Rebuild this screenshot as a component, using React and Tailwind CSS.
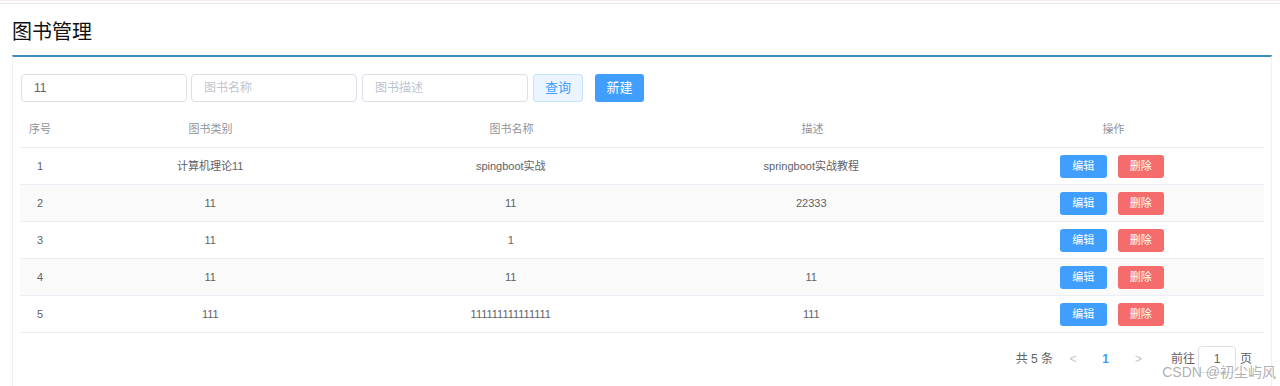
import React from 'react';

const rows = [
  { id: 1, type: '计算机理论11', name: 'spingboot实战', desc: 'springboot实战教程' },
  { id: 2, type: '11', name: '11', desc: '22333' },
  { id: 3, type: '11', name: '1', desc: '' },
  { id: 4, type: '11', name: '11', desc: '11' },
  { id: 5, type: '111', name: '111111111111111', desc: '111' },
];

function App() {
  return (
    <div className="relative h-[386px] overflow-hidden bg-white font-['Liberation_Sans','Noto_Sans_CJK_SC',sans-serif]">
      <div className="h-[4px] border-t border-t-[#fbe9e9] border-b border-b-[#e9e9e9]"></div>
      <div className="pl-[12px] pr-[8px]">
        <h1 className="h-[51px] pt-[15px] text-[20px] leading-[26px] text-[#111]">图书管理</h1>
        <div className="h-[340px] border-t-2 border-t-[#3c8dbc] border-x border-x-[#f0f0f0] px-[7px] pt-[17px]">
          <div className="ml-[1px] flex items-center">
            <input
              defaultValue="11"
              className="w-[166px] h-[28px] rounded-[4px] border border-[#dcdfe6] px-[12px] text-[12px] text-[#606266] outline-none"
            />
            <input
              placeholder="图书名称"
              className="ml-[4px] w-[166px] h-[28px] rounded-[4px] border border-[#dcdfe6] px-[12px] text-[12px] text-[#606266] placeholder:text-[#c0c4cc] outline-none"
            />
            <input
              placeholder="图书描述"
              className="ml-[5px] w-[166px] h-[28px] rounded-[4px] border border-[#dcdfe6] px-[12px] text-[12px] text-[#606266] placeholder:text-[#c0c4cc] outline-none"
            />
            <button className="ml-[5px] w-[50px] h-[28px] rounded-[3px] border border-[#c6e2ff] bg-[#ecf5ff] text-[13px] text-[#409eff]">查询</button>
            <button className="ml-[12px] w-[49px] h-[28px] rounded-[3px] bg-[#409eff] text-[13px] text-white">新建</button>
          </div>

          <div className="mt-[10px] w-[1244px] text-[11px]">
            <div className="flex h-[36px] items-center border-b border-[#ebeef5] text-[#909399]">
              <div className="w-[40px] text-center">序号</div>
              <div className="flex-1 text-center">图书类别</div>
              <div className="flex-1 text-center">图书名称</div>
              <div className="flex-1 text-center">描述</div>
              <div className="flex-1 text-center">操作</div>
            </div>
            {rows.map((r, i) => (
              <div
                key={r.id}
                className={`flex h-[37px] items-center border-b border-[#ebeef5] text-[#606266] ${i % 2 === 1 ? 'bg-[#fafafa]' : 'bg-white'}`}
              >
                <div className="w-[40px] text-center">{r.id}</div>
                <div className="flex-1 text-center">{r.type}</div>
                <div className="flex-1 text-center">{r.name}</div>
                <div className="flex-1 text-center">{r.desc}</div>
                <div className="flex-1 flex justify-center gap-[11px] pr-[2px]">
                  <button className="w-[47px] h-[23px] rounded-[3px] bg-[#409eff] text-[11px] text-white">编辑</button>
                  <button className="w-[46px] h-[23px] rounded-[3px] bg-[#f56c6c] text-[11px] text-white">删除</button>
                </div>
              </div>
            ))}
          </div>

          <div className="mt-[12px] flex h-[28px] items-center justify-end pr-[12px] text-[12px] text-[#606266]">
            <span className="mr-[4px]">共 5 条</span>
            <span className="w-[32px] text-center text-[#c0c4cc]">&lt;</span>
            <span className="w-[33px] text-center font-bold text-[#409eff]">1</span>
            <span className="w-[33px] text-center text-[#c0c4cc]">&gt;</span>
            <span className="ml-[16px]">前往</span>
            <input
              defaultValue="1"
              className="ml-[3px] mr-[4px] w-[38px] h-[27px] rounded-[4px] border border-[#dcdfe6] text-center text-[12px] text-[#606266] outline-none"
            />
            <span>页</span>
          </div>
        </div>
      </div>
      <div className="absolute right-[4px] bottom-[3px] text-[14px] text-[#9a9a9a]/80">CSDN @初尘屿风</div>
    </div>
  );
}

export default App;
